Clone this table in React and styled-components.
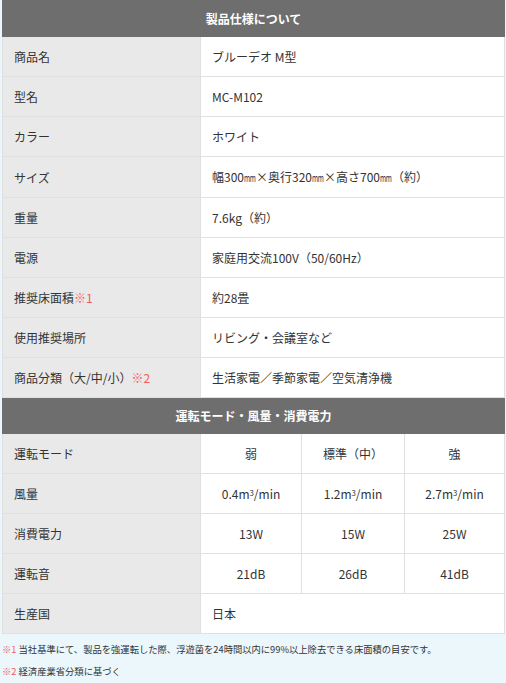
import React from "react";
import styled, { createGlobalStyle } from "styled-components";

const GlobalStyle = createGlobalStyle`
  html, body {
    margin: 0;
    padding: 0;
    background: #ecf7fc;
  }
  body {
    font-family: "Noto Sans CJK JP", "Noto Sans", sans-serif;
    color: #333;
  }
`;

const Wrapper = styled.div`
  width: 506px;
  padding-left: 2px;
  box-sizing: border-box;
`;

const Table = styled.table`
  width: 502px;
  table-layout: fixed;
  border-collapse: collapse;
  background: #fff;
  font-size: 12px;
`;

const HeadCell = styled.th`
  background: #6e6e6e;
  color: #fff;
  font-weight: 700;
  font-size: 12px;
  height: 35px;
  padding: 0;
  text-align: center;
  border: 1px solid #6e6e6e;
`;

const Label = styled.th`
  background: #e9e9e9;
  font-weight: 400;
  text-align: left;
  padding: 10px 11px;
  line-height: 19px;
  border: 1px solid #e0e0e0;
  white-space: nowrap;
`;

const Value = styled.td`
  padding: 10px 11px;
  line-height: 19px;
  text-align: ${({ $center }) => ($center ? "center" : "left")};
  border: 1px solid #e0e0e0;
  white-space: nowrap;
`;

const Mark = styled.span`
  color: #f25c5c;
`;

const Sup = styled.sup`
  font-size: 0.65em;
  vertical-align: 0.45em;
  line-height: 0;
`;

const Unit = styled.span`
  display: inline-block;
  width: 12px;
  font-size: 11px;
  letter-spacing: -0.5px;
  transform: scaleX(0.6);
  transform-origin: left center;
  white-space: nowrap;
`;

const Notes = styled.div`
  padding-top: 4px;
`;

const Note = styled.p`
  margin: 0;
  font-size: 9.3px;
  line-height: 22px;
  color: #333;
  white-space: nowrap;
`;

const mm = <Unit>mm</Unit>;

const specs = [
  ["商品名", "ブルーデオ M型"],
  ["型名", "MC-M102"],
  ["カラー", "ホワイト"],
  ["サイズ", <>幅300{mm}×奥行320{mm}×高さ700{mm}（約）</>],
  ["重量", "7.6kg（約）"],
  ["電源", "家庭用交流100V（50/60Hz）"],
  [<>推奨床面積<Mark>※1</Mark></>, "約28畳"],
  ["使用推奨場所", "リビング・会議室など"],
  [<>商品分類（大/中/小）<Mark>※2</Mark></>, "生活家電／季節家電／空気清浄機"],
];

const flow = (v) => (
  <>
    {v}m<Sup>3</Sup>/min
  </>
);

const modes = [
  ["運転モード", ["弱", "標準（中）", "強"]],
  ["風量", [flow("0.4"), flow("1.2"), flow("2.7")]],
  ["消費電力", ["13W", "15W", "25W"]],
  ["運転音", ["21dB", "26dB", "41dB"]],
];

export default function App() {
  return (
    <Wrapper>
      <GlobalStyle />
      <Table>
        <colgroup>
          <col style={{ width: 198 }} />
          <col style={{ width: 101 }} />
          <col style={{ width: 103 }} />
          <col style={{ width: 100 }} />
        </colgroup>
        <tbody>
          <tr>
            <HeadCell colSpan={4}>製品仕様について</HeadCell>
          </tr>
          {specs.map(([label, value], i) => (
            <tr key={i}>
              <Label>{label}</Label>
              <Value colSpan={3}>{value}</Value>
            </tr>
          ))}
          <tr>
            <HeadCell colSpan={4}>運転モード・風量・消費電力</HeadCell>
          </tr>
          {modes.map(([label, values], i) => (
            <tr key={i}>
              <Label>{label}</Label>
              {values.map((v, j) => (
                <Value key={j} $center>
                  {v}
                </Value>
              ))}
            </tr>
          ))}
          <tr>
            <Label>生産国</Label>
            <Value colSpan={3}>日本</Value>
          </tr>
        </tbody>
      </Table>
      <Notes>
        <Note>
          <Mark>※1</Mark> 当社基準にて、製品を強運転した際、浮遊菌を24時間以内に99%以上除去できる床面積の目安です。
        </Note>
        <Note>
          <Mark>※2</Mark> 経済産業省分類に基づく
        </Note>
      </Notes>
    </Wrapper>
  );
}
